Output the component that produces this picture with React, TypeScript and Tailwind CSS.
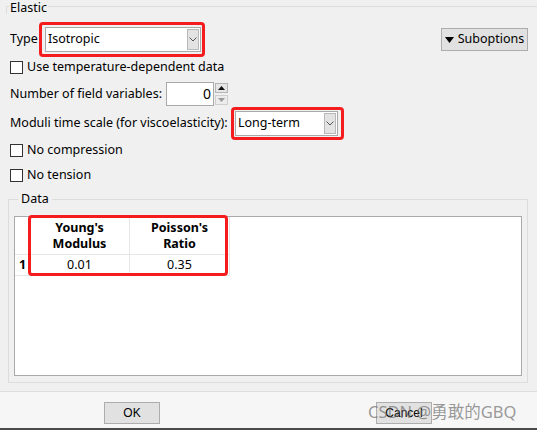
import React from 'react';

const Chevron: React.FC = () => (
  <svg width="8" height="5" viewBox="0 0 8 5" className="block">
    <path d="M0.5 0.5 L4 4 L7.5 0.5" fill="none" stroke="#555" strokeWidth="1" />
  </svg>
);

const ComboBox: React.FC<{ value: string; width: string }> = ({ value, width }) => (
  <div className={`${width} h-[25px] bg-white border border-[#a9a9a9] flex items-center pl-[2px] pr-[1px]`}>
    <span className="flex-1 leading-none">{value}</span>
    <div className="w-[12px] h-[21px] bg-[#e3e3e3] border border-[#b9b9b9] flex items-center justify-center">
      <Chevron />
    </div>
  </div>
);

const Check: React.FC<{ label: string; className?: string }> = ({ label, className = '' }) => (
  <div className={`flex items-center h-[13px] pl-[10px] ${className}`}>
    <div className="w-[13px] h-[13px] bg-white border border-[#333]" />
    <span className="ml-[4px] leading-none">{label}</span>
  </div>
);

const RedBox: React.FC<{ className?: string; children?: React.ReactNode }> = ({ className = '', children }) => (
  <div className={`border-[3px] border-[#f41c1c] rounded-[4px] flex items-center ${className}`}>{children}</div>
);

export default function App() {
  return (
    <div
      className="w-[537px] h-[430px] overflow-hidden bg-[#f0f0f0] text-[12.5px] text-black flex flex-col relative"
      style={{ fontFamily: '"Noto Sans", "Noto Sans CJK SC", sans-serif' }}
    >
      {/* Elastic legend */}
      <div className="flex h-[14px] ml-[6px] pt-[1px]">
        <div className="w-[3px] mt-[5px] h-[8px] border-l border-t border-[#dcdcdc]" />
        <span className="px-[1px] leading-[13px]">Elastic</span>
        <div className="flex-1 mt-[5px] border-t border-[#dcdcdc]" />
      </div>

      {/* Type row */}
      <div className="flex items-center mt-[8px] h-[35px]">
        <span className="pl-[10px] w-[39px]">Type</span>
        <RedBox className="w-[166px] h-[35px] pl-[3px]">
          <ComboBox value="Isotropic" width="w-[156px]" />
        </RedBox>
        <button className="ml-auto mr-[9px] w-[87px] h-[23px] bg-[#e1e1e1] border border-[#adadad] flex items-center justify-center gap-[4px]">
          <svg width="9" height="6" viewBox="0 0 9 6">
            <path d="M0 0 H9 L4.5 6 Z" fill="#000" />
          </svg>
          <span className="leading-none">Suboptions</span>
        </button>
      </div>

      <Check label="Use temperature-dependent data" className="mt-[4px]" />

      {/* Number of field variables */}
      <div className="flex items-center mt-[8px] h-[24px] pl-[10px]">
        <span className="w-[156px]">Number of field variables:</span>
        <div className="w-[48px] h-[24px] bg-white border border-[#a9a9a9] flex items-center justify-end pr-[2px]">
          <span className="leading-none text-[14px]">0</span>
        </div>
        <div className="ml-[1px] w-[13px] h-[24px] flex flex-col justify-between py-[1px]">
          <div className="h-[10px] bg-[#e6e6e6] border border-[#b5b5b5] flex items-center justify-center">
            <svg width="7" height="4" viewBox="0 0 7 4"><path d="M0 4 H7 L3.5 0 Z" fill="#111" /></svg>
          </div>
          <div className="h-[10px] bg-[#ececec] border border-[#cfcfcf] flex items-center justify-center">
            <svg width="7" height="4" viewBox="0 0 7 4"><path d="M0 0 H7 L3.5 4 Z" fill="#9a9a9a" /></svg>
          </div>
        </div>
      </div>

      {/* Moduli time scale */}
      <div className="flex items-center mt-[1px] h-[33px] pl-[10px]">
        <span className="w-[221px] whitespace-nowrap">Moduli time scale (for viscoelasticity):</span>
        <RedBox className="w-[113px] h-[33px] pl-[1px]">
          <ComboBox value="Long-term" width="w-[103px]" />
        </RedBox>
      </div>

      <Check label="No compression" className="mt-[4px]" />
      <Check label="No tension" className="mt-[12px]" />

      {/* Data group */}
      <div className="relative mt-[17px] ml-[8px] w-[520px] h-[184px] border border-[#dcdcdc] px-[5px] pt-[16px]">
        <span className="absolute -top-[8px] left-[9px] px-[3px] bg-[#f0f0f0] leading-[14px]">Data</span>
        <div className="w-[508px] h-[160px] bg-white border border-[#a9a9a9] relative">
          <div className="flex border-b border-[#e6e6e6] w-[215px] h-[38px]">
            <div className="w-[15px] border-r border-[#e6e6e6]" />
            <div className="w-[100px] border-r border-[#e6e6e6] flex flex-col items-center justify-center font-bold leading-[16px]">
              <span>Young's</span>
              <span>Modulus</span>
            </div>
            <div className="w-[100px] border-r border-[#e6e6e6] flex flex-col items-center justify-center font-bold leading-[16px]">
              <span>Poisson's</span>
              <span>Ratio</span>
            </div>
          </div>
          <div className="flex border-b border-[#e6e6e6] w-[215px] h-[21px]">
            <div className="w-[15px] border-r border-[#e6e6e6] font-bold pl-[4px] flex items-center">1</div>
            <div className="w-[100px] border-r border-[#e6e6e6] flex items-center justify-center">0.01</div>
            <div className="w-[100px] border-r border-[#e6e6e6] flex items-center justify-center">0.35</div>
          </div>
          <div className="absolute left-[13px] -top-[2px] w-[200px] h-[61px] border-[3px] border-[#f41c1c] rounded-[4px]" />
        </div>
      </div>

      {/* Bottom buttons */}
      <div className="mt-[8px] flex-1 bg-[#f6f6f6] border-t border-[#dedede] flex items-start pt-[10px] relative">
        <button
          className="ml-[104px] w-[56px] h-[22px] bg-[#e1e1e1] border border-[#adadad] flex items-center justify-center text-[12px]"
          style={{ fontFamily: '"Liberation Sans", Arial, sans-serif' }}
        >
          OK
        </button>
        <button
          className="ml-[216px] w-[56px] h-[22px] bg-[#e1e1e1] border border-[#adadad] flex items-center justify-center text-[12px]"
          style={{ fontFamily: '"Liberation Sans", Arial, sans-serif' }}
        >
          Cancel
        </button>
        <span className="absolute left-[368px] top-[9px] text-[16.5px] leading-[22px] text-[#6e6e6e]/70 whitespace-nowrap">
          CSDN @勇敢的GBQ
        </span>
      </div>
      <div className="h-[2px] bg-[#4a4a4a]" />
    </div>
  );
}
